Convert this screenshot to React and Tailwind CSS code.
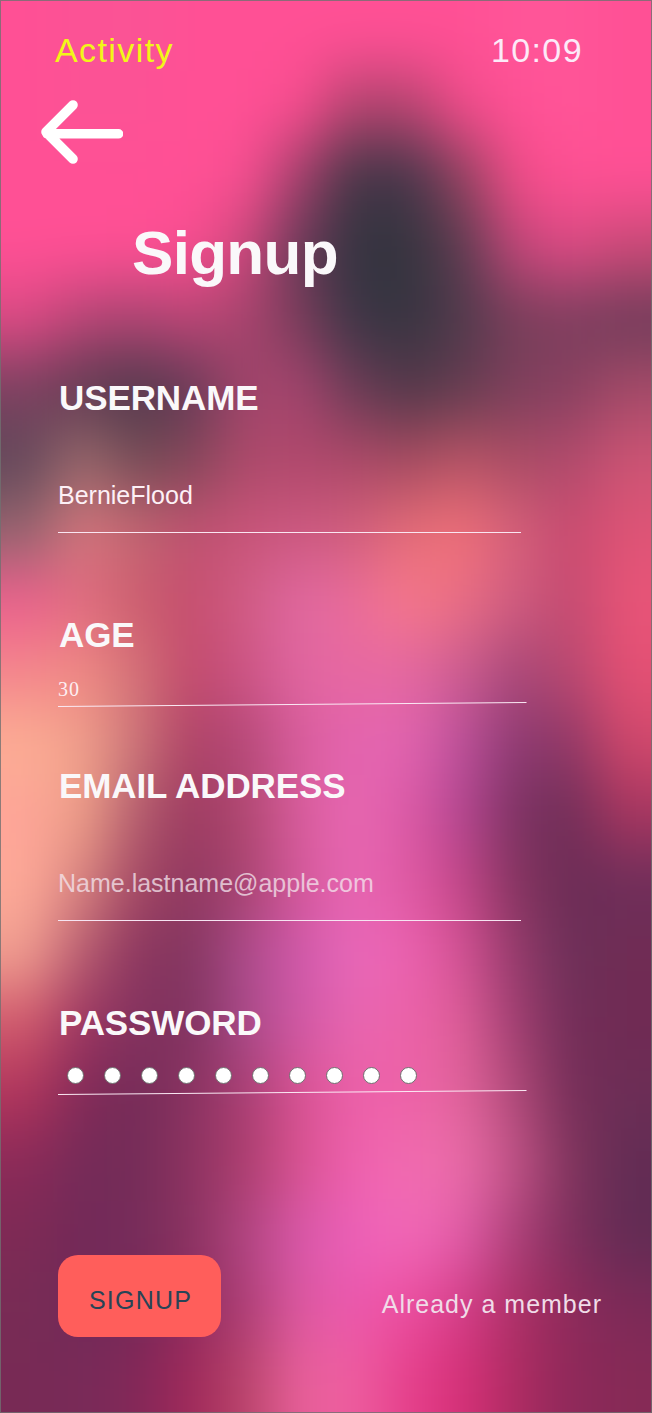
import React from "react";

// Colour samples of the blurred backdrop, row by row.
const BACKDROP = [
  "ff5095 fb5295 fa5395 ff5095 ff5095 ff5095 ff5095 ff5095 ff5095 ff5598 ff5598 ff5095",
  "ff5095 fc5295 fc5295 ff5095 ff5095 f84d8f b4446f b4446f f04c8a ff5095 ff5598 ff5095",
  "ff5095 ff5095 ff5095 ff5095 f84f91 a4406c 443646 44364a 90425f f04c88 fe5093 ff5095",
  "ff5095 ff5095 fe5094 f84e90 cc487c 683a58 343440 34343e 5c3c50 c04678 dc4a84 c84a76",
  "dc4a84 b84676 ac4472 bc4676 a8446e 783c5a 3c3646 363440 503a4c 783e5a 7e3e5e 703c5a",
  "7c4060 603a52 50384c 643a56 a0446a a4446e 6c3c56 52384a 643c50 7e3f5c 884060 a44a68",
  "62485a 986a6c 744c56 824658 ac4a6a b0486c ac4868 a44a60 b85466 aa4c64 b04a6c cc5474",
  "94646e d4767c c26672 be5270 c85478 cc5880 d05e7c e46c78 f07078 d4607a c84a70 de5476",
  "ec608e e06c80 cc5f6f c64e6e d05c84 e068a0 ea6c9a f6788a ea6e84 d05c80 c44a70 e85478",
  "f4868c f08a84 d47278 c24a6c cc5484 e066a0 e868a2 e468a0 cc5c90 a84878 b84870 e45074",
  "fcae94 f0a08c cc7678 ae4266 b44878 d85c9c e464b0 e264b0 bc509a 8c3a72 903866 d0486c",
  "fea498 eea088 b45e6e 9c3a60 b04870 d85c9c e868b2 dc5aa6 b44690 7c3262 702e58 a83660",
  "feaa98 d88480 a44864 903860 a84470 d4589a e866b2 e05aa4 c44688 84345f 6c2c55 6e2e5a",
  "f09e90 b85c70 8c365f 82365f ac4a8a d058aa e868ba ec62b0 d45294 943a6a 6c3058 702c54",
  "d0586c 9c3460 82325f 80325f a84a88 d058a4 e866b0 ec62a8 de5e98 a03e70 722e58 702a54",
  "b0345c 822a58 742c58 8a3260 a83e72 d85292 ec60a8 ee62a8 e2649c b04a78 762e58 6c2e56",
  "8a2a58 742b58 742c58 8c3260 ac3e6e d85290 ee60ae f26cb0 ea6ca8 c05286 80345c 622c54",
  "7e2a55 722958 762c5a 8a3260 b04480 d858aa ec60b8 f268b8 e25ca8 ac4078 7e2e5c 622c54",
  "782c55 722958 762958 8e2a5c ac3e74 dc58a0 ec58ae ec4e9f d43e88 ac3066 8e2a5a 7c2a58",
  "782a55 782a58 822858 a0285a b8446a e8609a ee5ea0 e6408c d63078 ae2c62 8e285a 862a56",
].map((row) => row.split(" "));

const COLS = 12;
const ROWS = 20;
const CELL_W = 652 / COLS;
const CELL_H = 1413 / ROWS;

function Backdrop() {
  return (
    <svg
      className="absolute inset-0 -z-10 size-full"
      viewBox="0 0 652 1413"
      preserveAspectRatio="none"
      aria-hidden="true"
    >
      <defs>
        <filter
          id="soften"
          filterUnits="userSpaceOnUse"
          x="-120"
          y="-120"
          width="892"
          height="1653"
          colorInterpolationFilters="sRGB"
        >
          <feGaussianBlur stdDeviation="26 31" />
        </filter>
      </defs>
      <g filter="url(#soften)" shapeRendering="crispEdges">
        {BACKDROP.map((row, r) =>
          row.map((color, c) => {
            const left = c === 0 ? -120 : c * CELL_W;
            const right = c === COLS - 1 ? 772 : (c + 1) * CELL_W + 1;
            const top = r === 0 ? -120 : r * CELL_H;
            const bottom = r === ROWS - 1 ? 1533 : (r + 1) * CELL_H + 1;
            return (
              <rect
                key={`${r}-${c}`}
                x={left}
                y={top}
                width={right - left}
                height={bottom - top}
                fill={`#${color}`}
              />
            );
          }),
        )}
      </g>
    </svg>
  );
}

function Label({ children, className }) {
  return (
    <h2
      className={`ml-px text-[35px] leading-10 font-bold tracking-[-0.1px] whitespace-nowrap text-[#faf8fa] ${className}`}
    >
      {children}
    </h2>
  );
}

function SlantedRule({ className }) {
  return (
    <svg className={`block h-[7px] w-[469px] ${className}`} viewBox="0 0 469 7" aria-hidden="true">
      <path d="M0 5.5L468.5 1.5" stroke="#fbe9f4" strokeWidth="1" />
    </svg>
  );
}

export default function App() {
  return (
    <main className="relative isolate flex h-[1413px] w-[652px] flex-col overflow-hidden font-['Liberation_Sans',Arial,sans-serif]">
      <Backdrop />

      <header className="mt-7 flex justify-between pr-[69px] pl-[55px] text-[34px] leading-[44px] tracking-[1.4px]">
        <span className="text-[#f2f618]">Activity</span>
        <time className="text-[#fceaf8]">10:09</time>
      </header>

      <button type="button" aria-label="Back" className="mt-7 ml-[41px] h-16 w-[82px]">
        <svg viewBox="0 0 82 64" className="block size-full" fill="none">
          <path
            d="M32 5L5 32L32 59M6 33.8H77.5"
            stroke="#fff"
            strokeWidth="9.6"
            strokeLinecap="round"
            strokeLinejoin="round"
          />
        </svg>
      </button>

      <h1 className="mt-[53px] ml-[132px] text-[62px] leading-[72px] font-bold tracking-[-0.7px] text-[#faf8fa]">
        Signup
      </h1>

      <form className="ml-[58px] flex flex-col">
        <Label className="mt-[89px]">USERNAME</Label>
        <p className="mt-[61px] text-[25px] leading-8 text-[#fdf0f6]">BernieFlood</p>
        <div className="mt-[21px] h-px w-[463px] bg-[#fae6f2]" />

        <Label className="mt-[82px]">AGE</Label>
        <p className="mt-[22px] font-['Liberation_Serif',serif] text-[20px] leading-6 tracking-[0.9px] text-[#fdeef2]">
          30
        </p>
        <SlantedRule />

        <Label className="mt-[58px]">EMAIL ADDRESS</Label>
        <p className="mt-[61px] text-[25px] leading-8 text-[#f4e6ee]/75">Name.lastname@apple.com</p>
        <div className="mt-[21px] h-px w-[463px] bg-[#f6e4f2]" />

        <Label className="mt-[82px]">PASSWORD</Label>
        <div className="mt-6 ml-[9px] flex gap-5">
          {Array.from({ length: 10 }, (_, i) => (
            <span key={i} className="size-[17px] rounded-full border border-[#707070] bg-white" />
          ))}
        </div>
        <SlantedRule className="mt-[5px]" />
      </form>

      <footer className="mt-[159px] flex items-start justify-between pr-[50px] pl-[58px] text-[25px] leading-8">
        <button
          type="button"
          className="flex h-[82px] w-[163px] items-start justify-center rounded-[20px] bg-[#ff5e5b] pt-[29px] pl-[2px] tracking-[1.2px] text-[#274456]"
        >
          SIGNUP
        </button>
        <a className="mt-[33px] tracking-[1px] text-[#f0dce8]">Already a member</a>
      </footer>

      <div className="pointer-events-none absolute inset-0 border border-[#707070]/80" />
    </main>
  );
}
